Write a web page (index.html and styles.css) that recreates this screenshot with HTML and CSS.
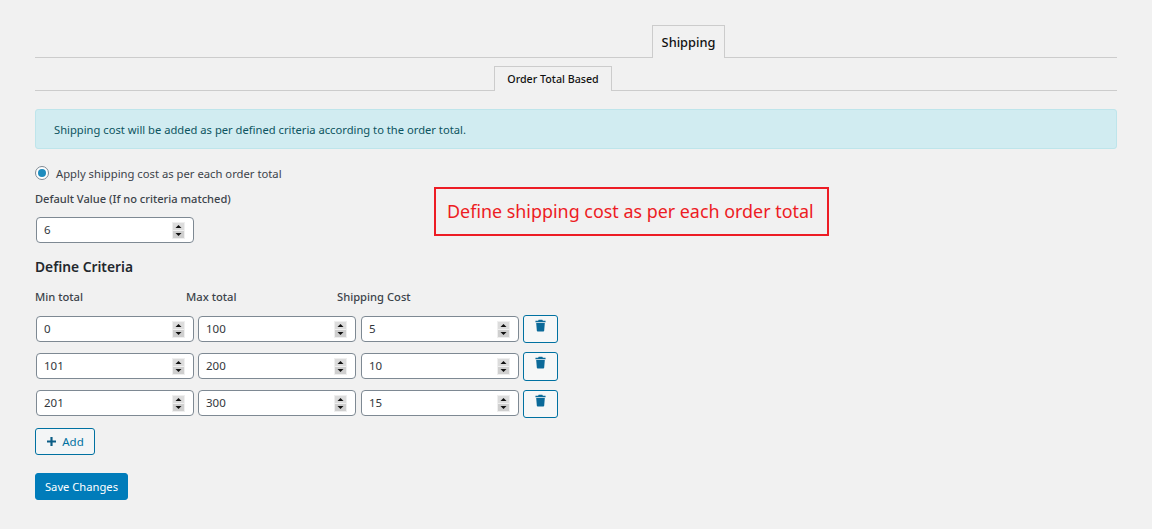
FILE: index.html
```html
<!DOCTYPE html>
<html lang="en">
<head>
<meta charset="utf-8">
<title>Shipping</title>
<link rel="stylesheet" href="styles.css">
</head>
<body>
<svg class="defs" width="0" height="0" aria-hidden="true">
  <symbol id="spin" viewBox="0 0 15 17">
    <rect x="1" width="13" height="17" fill="#efefef"/>
    <rect x="2" y="1" width="11" height="7" fill="#dcdcdc"/>
    <rect x="2" y="9" width="11" height="7" fill="#cfcfcf"/>
    <path d="M7.5 3 L10.5 6 H4.5 Z" fill="#111"/>
    <path d="M4.5 11 H10.5 L7.5 14 Z" fill="#111"/>
  </symbol>
  <symbol id="trash" viewBox="0 0 12 13">
    <path d="M4 .3 H8 L8.6 1.4 H11.5 V2.9 H.5 V1.4 H3.4 Z M1.3 3.7 H10.7 L10 12.2 Q9.9 13 9.1 13 H2.9 Q2.1 13 2 12.2 Z"/>
  </symbol>
</svg>
<main class="wrap">
  <nav class="tabs tabs-main"><a class="tab tab-shipping">Shipping</a></nav>
  <nav class="tabs tabs-sub"><a class="tab tab-order">Order Total Based</a></nav>
  <div class="notice">Shipping cost will be added as per defined criteria according to the order total.</div>
  <label class="radio-row"><span class="radio"></span><span class="radio-text">Apply shipping cost as per each order total</span></label>
  <div class="field-label">Default Value (If no criteria matched)</div>
  <div class="num default-num"><span>6</span><svg class="spin"><use href="#spin"/></svg></div>
  <h2 class="heading">Define Criteria</h2>
  <div class="cols"><span>Min total</span><span>Max total</span><span>Shipping Cost</span></div>
  <div class="row row-1">
    <div class="num"><span>0</span><svg class="spin"><use href="#spin"/></svg></div>
    <div class="num"><span>100</span><svg class="spin"><use href="#spin"/></svg></div>
    <div class="num"><span>5</span><svg class="spin"><use href="#spin"/></svg></div>
    <button class="del"><svg class="trash"><use href="#trash"/></svg></button>
  </div>
  <div class="row row-2">
    <div class="num"><span>101</span><svg class="spin"><use href="#spin"/></svg></div>
    <div class="num"><span>200</span><svg class="spin"><use href="#spin"/></svg></div>
    <div class="num"><span>10</span><svg class="spin"><use href="#spin"/></svg></div>
    <button class="del"><svg class="trash"><use href="#trash"/></svg></button>
  </div>
  <div class="row row-3">
    <div class="num"><span>201</span><svg class="spin"><use href="#spin"/></svg></div>
    <div class="num"><span>300</span><svg class="spin"><use href="#spin"/></svg></div>
    <div class="num"><span>15</span><svg class="spin"><use href="#spin"/></svg></div>
    <button class="del"><svg class="trash"><use href="#trash"/></svg></button>
  </div>
  <button class="add"><svg class="plus" viewBox="0 0 10 10"><path d="M3.8 0 H6.2 V3.8 H10 V6.2 H6.2 V10 H3.8 V6.2 H0 V3.8 H3.8 Z"/></svg>Add</button>
  <button class="save">Save Changes</button>
</main>
<div class="callout">Define shipping cost as per each order total</div>
</body>
</html>
```
FILE: styles.css
```css
* { box-sizing: border-box; }
html, body { margin: 0; padding: 0; }
body {
  position: relative;
  height: 529px;
  overflow: hidden;
  background: #f1f1f1;
  color: #3c434a;
  font-family: "Noto Sans", "Open Sans", sans-serif;
  font-size: 12px;
  line-height: 18px;
}
.defs { position: absolute; }
.wrap { width: 1082px; margin-left: 35px; padding-top: 25px; display: flex; flex-direction: column; align-items: flex-start; }
.tabs { width: 100%; display: flex; border-bottom: 1px solid #ccc; }
.tabs-main { height: 33px; }
.tabs-sub { height: 25px; margin-top: 8px; }
.tab { display: block; border: 1px solid #ccc; border-bottom: 0; background: #f1f1f1; color: #111; font-weight: 500; text-align: center; margin-bottom: -1px; }
.tab-shipping { width: 73px; height: 33px; margin-left: 617px; font-size: 12.8px; line-height: 33px; }
.tab-order { width: 118px; height: 25px; margin-left: 459px; font-size: 10.7px; line-height: 25px; }
.notice {
  width: 100%;
  height: 40px;
  margin-top: 18px;
  padding-left: 18px;
  border: 1px solid #bee5eb;
  border-radius: 3px;
  background: #d1ecf1;
  color: #0c5460;
  font-size: 11.2px;
  line-height: 39px;
}
.radio-row { display: flex; align-items: center; height: 18px; margin-top: 15px; gap: 7px; font-size: 11.25px; }
.radio-text { padding-top: 1px; }
.radio { width: 14px; height: 14px; border: 1px solid #7e8993; border-radius: 50%; background: #fff; display: flex; align-items: center; justify-content: center; }
.radio::after { content: ""; width: 8px; height: 8px; border-radius: 50%; background: #1e8cbe; }
.field-label { margin-top: 8px; height: 18px; font-size: 11.1px; font-weight: 500; }
.num {
  width: 158px;
  height: 26px;
  flex: none;
  display: flex;
  align-items: center;
  justify-content: space-between;
  padding: 0 7px;
  background: #fff;
  border: 1px solid #7e8993;
  border-radius: 4px;
  color: #32373c;
  font-size: 11.5px;
}
.default-num { margin: 9px 0 0 1px; }
.spin { width: 15px; height: 17px; }
.heading { margin: 14px 0 0; height: 20px; font-size: 13.8px; line-height: 20px; font-weight: 600; color: #23282d; }
.cols { display: flex; margin-top: 11px; height: 18px; font-size: 11.2px; font-weight: 500; }
.cols span { width: 151px; }
.row { display: flex; align-items: flex-start; margin-left: 1px; }
.row-1 { margin-top: 9px; }
.row-2 { margin-top: 9px; }
.row-3 { margin-top: 9px; }
.row .num { margin-top: 1px; }
.row-3 .num { margin-top: 0; }
.row .num + .num { margin-left: 4px; }
.row .num:nth-child(3) { margin-left: 5px; }
.del {
  width: 35px;
  height: 28px;
  margin-left: 4px;
  padding: 3px 0 0;
  display: flex;
  justify-content: center;
  align-items: flex-start;
  background: #f6f7f7;
  border: 1px solid #0071a1;
  border-radius: 3px;
}
.row-2 .del { height: 29px; }
.trash { width: 11px; height: 13px; fill: #0b6a99; }
.add {
  width: 60px;
  height: 27px;
  margin-top: 10px;
  padding: 0 0 0 1px;
  display: flex;
  align-items: center;
  justify-content: center;
  gap: 6px;
  background: #f3f5f6;
  border: 1px solid #0071a1;
  border-radius: 3px;
  color: #0071a1;
  font-family: inherit;
  font-size: 11.5px;
}
.plus { width: 9px; height: 9px; fill: #0b5d86; }
.save {
  width: 93px;
  height: 27px;
  margin-top: 18px;
  padding: 0;
  background: #007cba;
  border: 1px solid #007cba;
  border-radius: 3px;
  color: #fff;
  font-family: inherit;
  font-size: 11.2px;
}
.callout {
  position: absolute;
  left: 434px;
  top: 187px;
  width: 395px;
  height: 49px;
  padding-left: 11px;
  border: 2px solid #ed1c24;
  color: #ed1c24;
  background: #f1f1f1;
  font-size: 17.9px;
  line-height: 44px;
  white-space: nowrap;
}
```
